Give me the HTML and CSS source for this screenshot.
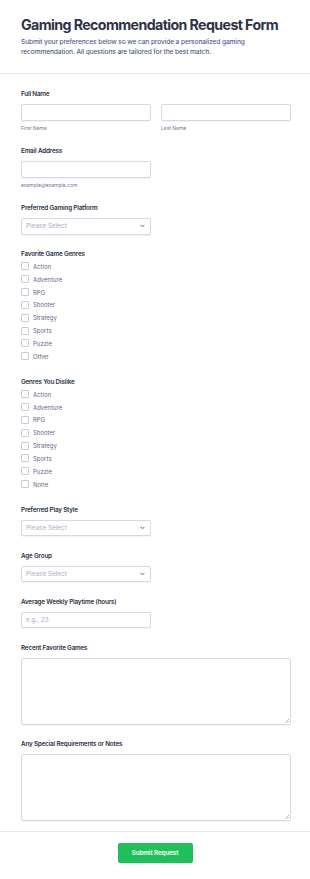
FILE: index.html
```html
<!DOCTYPE html>
<html lang="en">
<head>
<meta charset="utf-8">
<title>Gaming Recommendation Request Form</title>
<link rel="stylesheet" href="styles.css">
</head>
<body>
<div class="page">
  <header class="form-header">
    <h1 class="title">Gaming Recommendation Request Form</h1>
    <p class="subtitle">Submit your preferences below so we can provide a personalized gaming recommendation. All questions are tailored for the best match.</p>
  </header>
  <form class="form-body">
    <div class="field">
      <label class="label">Full Name</label>
      <div class="row">
        <div class="col">
          <input class="control" type="text">
          <span class="sublabel">First Name</span>
        </div>
        <div class="col">
          <input class="control" type="text">
          <span class="sublabel">Last Name</span>
        </div>
      </div>
    </div>
    <div class="field">
      <label class="label">Email Address</label>
      <div class="col">
        <input class="control" type="email">
        <span class="sublabel">example@example.com</span>
      </div>
    </div>
    <div class="field">
      <label class="label">Preferred Gaming Platform</label>
      <div class="select"><span>Please Select</span><svg class="chev" width="5" height="4" viewBox="0 0 5 4"><path d="M0.6 0.9 L2.5 2.8 L4.4 0.9" fill="none" stroke="#5b6480" stroke-width="1"/></svg></div>
    </div>
    <div class="field">
      <label class="label">Favorite Game Genres</label>
      <div class="checks">
        <label class="check"><input type="checkbox"><span>Action</span></label>
        <label class="check"><input type="checkbox"><span>Adventure</span></label>
        <label class="check"><input type="checkbox"><span>RPG</span></label>
        <label class="check"><input type="checkbox"><span>Shooter</span></label>
        <label class="check"><input type="checkbox"><span>Strategy</span></label>
        <label class="check"><input type="checkbox"><span>Sports</span></label>
        <label class="check"><input type="checkbox"><span>Puzzle</span></label>
        <label class="check"><input type="checkbox"><span>Other</span></label>
      </div>
    </div>
    <div class="field">
      <label class="label">Genres You Dislike</label>
      <div class="checks">
        <label class="check"><input type="checkbox"><span>Action</span></label>
        <label class="check"><input type="checkbox"><span>Adventure</span></label>
        <label class="check"><input type="checkbox"><span>RPG</span></label>
        <label class="check"><input type="checkbox"><span>Shooter</span></label>
        <label class="check"><input type="checkbox"><span>Strategy</span></label>
        <label class="check"><input type="checkbox"><span>Sports</span></label>
        <label class="check"><input type="checkbox"><span>Puzzle</span></label>
        <label class="check"><input type="checkbox"><span>None</span></label>
      </div>
    </div>
    <div class="field">
      <label class="label">Preferred Play Style</label>
      <div class="select"><span>Please Select</span><svg class="chev" width="5" height="4" viewBox="0 0 5 4"><path d="M0.6 0.9 L2.5 2.8 L4.4 0.9" fill="none" stroke="#5b6480" stroke-width="1"/></svg></div>
    </div>
    <div class="field">
      <label class="label">Age Group</label>
      <div class="select"><span>Please Select</span><svg class="chev" width="5" height="4" viewBox="0 0 5 4"><path d="M0.6 0.9 L2.5 2.8 L4.4 0.9" fill="none" stroke="#5b6480" stroke-width="1"/></svg></div>
    </div>
    <div class="field">
      <label class="label">Average Weekly Playtime (hours)</label>
      <input class="control half" type="text" placeholder="e.g., 23">
    </div>
    <div class="field">
      <label class="label">Recent Favorite Games</label>
      <div class="area-wrap"><textarea class="area"></textarea></div>
    </div>
    <div class="field">
      <label class="label">Any Special Requirements or Notes</label>
      <div class="area-wrap"><textarea class="area"></textarea></div>
    </div>
  </form>
  <footer class="form-footer">
    <button class="submit" type="button">Submit Request</button>
  </footer>
</div>
</body>
</html>
```
FILE: styles.css
```css
* { box-sizing: border-box; }
html, body { margin: 0; padding: 0; background: #ffffff; }
body { font-family: Inter, "Noto Sans", "Liberation Sans", sans-serif; color: #2c3345; }
.page { width: 310px; }
.form-header {
  padding: 15px 19px 16px 21px;
  border-bottom: 1px solid #e6e8ee;
}
.title {
  margin: 0;
  font-size: 14.2px;
  line-height: 20px;
  font-weight: 700;
  color: #2c3345;
  letter-spacing: -0.6px;
  white-space: nowrap;
}
.subtitle {
  margin: 2px 0 0;
  max-width: 262px;
  font-size: 6.6px;
  line-height: 10px;
  color: #4f5f8c;
  font-weight: 500;
  letter-spacing: -0.1px;
}
.form-body {
  padding: 15px 19px 10px 21px;
  display: flex;
  flex-direction: column;
  gap: 14.5px;
}
.field { display: flex; flex-direction: column; }
.label {
  font-size: 6.3px;
  line-height: 10px;
  font-weight: 600;
  color: #2c3345;
  letter-spacing: -0.18px;
  margin-bottom: 5px;
}
.row { display: flex; gap: 10px; }
.col { display: flex; flex-direction: column; width: 130px; }
.control {
  height: 16.5px;
  width: 100%;
  border: 1px solid #d6d9e4;
  border-radius: 2px;
  background: #fff;
  font-family: inherit;
  font-size: 6.4px;
  padding: 0 4px;
  color: #2c3345;
  margin: 0;
  box-shadow: 0 0.5px 1px rgba(40,50,80,0.06);
}
.control.half { width: 130px; }
.control::placeholder { color: #a8aec3; }
.sublabel {
  margin-top: 3px;
  font-size: 5px;
  line-height: 8px;
  color: #6f7692;
}
.select {
  width: 130px;
  height: 16.5px;
  border: 1px solid #d6d9e4;
  border-radius: 2px;
  display: flex;
  align-items: center;
  justify-content: space-between;
  padding: 0 5px 0 4px;
  font-size: 6.4px;
  color: #a8aec3;
  box-shadow: 0 0.5px 1px rgba(40,50,80,0.06);
}
.chev { display: block; }
.checks { display: flex; flex-direction: column; margin-top: -4px; margin-bottom: -0.5px; }
.check {
  display: flex;
  align-items: center;
  height: 12.85px;
  font-size: 6px;
  color: #626a85;
  gap: 4px;
}
.check input {
  appearance: none;
  -webkit-appearance: none;
  margin: 0;
  width: 8px;
  height: 8px;
  border: 1px solid #c8ccd8;
  border-radius: 1px;
  background: #fff;
  flex: none;
}
.area-wrap { position: relative; width: 270px; height: 67px; }
.area {
  display: block;
  width: 270px;
  height: 67px;
  border: 1px solid #d6d9e4;
  border-radius: 2px;
  resize: none;
  font-family: inherit;
  font-size: 6.4px;
  margin: 0;
  box-shadow: 0 0.5px 1px rgba(40,50,80,0.06);
}
.area-wrap::after {
  content: "";
  position: absolute;
  right: 2px;
  bottom: 2px;
  width: 4px;
  height: 4px;
  background: linear-gradient(135deg, transparent 45%, #b9bdcc 45%, #b9bdcc 55%, transparent 55%, transparent 70%, #b9bdcc 70%, #b9bdcc 80%, transparent 80%);
}
.form-footer {
  border-top: 1px solid #e6e8ee;
  display: flex;
  justify-content: center;
  padding: 11px 0 16px;
}
.submit {
  width: 75px;
  height: 20px;
  border: none;
  border-radius: 2px;
  background: #1fbf5c;
  color: #ffffff;
  font-family: inherit;
  font-size: 6.3px;
  font-weight: 600;
  letter-spacing: -0.1px;
  padding: 0;
}
```
